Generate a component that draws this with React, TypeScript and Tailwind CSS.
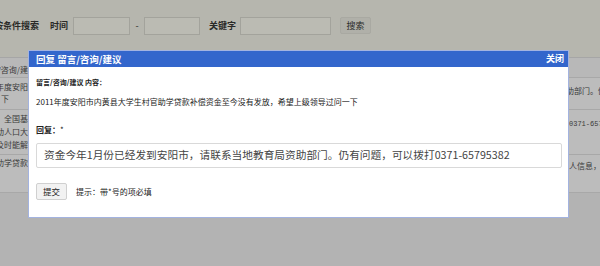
import React from 'react';

const font = "font-['Noto_Sans_CJK_SC','Noto_Sans',sans-serif]";

function SearchBar() {
  return (
    <div className="h-[58px] bg-[#b6b6ae] border-b border-[#a6a6a6] pt-[17px] flex items-start text-[9px] font-bold text-[#2a2a28] leading-[18px]">
      <span className="shrink-0 ml-[-6px] w-[44px] whitespace-nowrap">按条件搜索</span>
      <span className="shrink-0 ml-[12px] w-[23px]">时间</span>
      <div className="shrink-0 w-[57px] h-[18px] border border-[#a3a39c] bg-[#bbbbb3]" />
      <span className="shrink-0 w-[14px] text-center font-normal">-</span>
      <div className="shrink-0 w-[56px] h-[18px] border border-[#a3a39c] bg-[#bbbbb3]" />
      <span className="shrink-0 ml-[9px] w-[31px] whitespace-nowrap">关键字</span>
      <div className="shrink-0 w-[91px] h-[18px] border border-[#a3a39c] bg-[#bbbbb3]" />
      <button className="shrink-0 ml-[9px] w-[31px] h-[17px] rounded-[2px] border border-[#a9a9a2] bg-[#b0b0a9] text-[9px] font-normal leading-[15px] text-[#2a2a28]">
        搜索
      </button>
    </div>
  );
}

const rows = [
  { h: 20, bg: 'bg-[#b8b8b8]', left: ['留言/咨询/建'], right: [], leftPad: 'pt-[6px]', rightPad: '', lh: 'leading-[12px]' },
  { h: 32, bg: 'bg-[#bcbcbc]', left: ['2011年度安阳', '下'], right: ['教育局资助部门。仍'], leftPad: 'pt-[3px]', rightPad: 'pt-[7px]', lh: 'leading-[12px]' },
  { h: 45, bg: 'bg-[#bcbcbc]', left: ['全国基', '流动人口大', '能及时能解'], right: ['', '0371-65795382'], leftPad: 'pt-[2px]', rightPad: 'pt-[8px]', lh: 'leading-[13px]' },
  { h: 38, bg: 'bg-[#bcbcbc]', left: ['的助学贷款'], right: ['人信息，'], leftPad: 'pt-[2px]', rightPad: 'pt-[5px]', lh: 'leading-[12px]' },
];

function PageTable() {
  return (
    <div>
      {rows.map((r, i) => (
        <div
          key={i}
          className={`flex border-b border-[#a8a8a8] ${r.bg}`}
          style={{ height: r.h }}
        >
          <div className={`w-[28px] overflow-hidden flex flex-col items-end text-[8px] text-[#3a3a3a] whitespace-nowrap ${r.lh} ${r.leftPad}`}>
            {r.left.map((t, j) => (
              <span key={j} className={i === 1 && j === 1 ? 'self-start pl-[1px]' : ''}>{t}</span>
            ))}
          </div>
          <div className="flex-1" />
          <div className={`w-[31px] overflow-hidden flex flex-col text-[8px] text-[#3a3a3a] whitespace-nowrap ${r.lh} ${r.rightPad}`}>
            {r.right.map((t, j) => (
              <span key={j} className={t.startsWith('0371') ? "font-['Liberation_Mono',monospace] text-[7px]" : i === 1 ? 'ml-[-35px]' : ''}>
                {t}
              </span>
            ))}
          </div>
        </div>
      ))}
    </div>
  );
}

function ReplyDialog() {
  return (
    <div className="absolute left-[28px] top-[50px] w-[541px] border border-[#a3b3e0] bg-white">
      <div className="h-[16px] bg-[#3366cc] flex items-center justify-between px-[7px] text-white font-bold">
        <span className="text-[9.5px] leading-[16px]">回复 留言/咨询/建议</span>
        <span className="text-[9px] leading-[16px] mr-[-3px]">关闭</span>
      </div>
      <div className="pl-[7px] pr-[6px] pt-[10px] pb-[17px] text-[#222]">
        <div className="text-[7px] leading-[10px] font-bold">留言/咨询/建议 内容：</div>
        <div className="mt-[10px] text-[8px] leading-[10px]">
          2011年度安阳市内黄县大学生村官助学贷款补偿资金至今没有发放，希望上级领导过问一下
        </div>
        <div className="mt-[18px] text-[8px] leading-[10px] font-bold">
          回复：<span className="font-normal">*</span>
        </div>
        <div className="mt-[8px] h-[25px] border border-[#d9d9d9] rounded-[2px] pl-[7px] flex items-center text-[10.7px] text-[#444] whitespace-nowrap">
          资金今年1月份已经发到安阳市，请联系当地教育局资助部门。仍有问题，可以拨打0371-65795382
        </div>
        <div className="mt-[15px] flex items-center">
          <button className="w-[31px] h-[17px] rounded-[2px] border border-[#d0d0d0] bg-[#f2f2f2] text-[8.5px] leading-[15px] text-[#222]">
            提交
          </button>
          <span className="ml-[9px] text-[8px] leading-[10px] text-[#222]">提示：带*号的项必填</span>
        </div>
      </div>
    </div>
  );
}

export default function App() {
  return (
    <div className={`relative w-[600px] h-[266px] overflow-hidden bg-[#b3b3b3] ${font}`}>
      <SearchBar />
      <PageTable />
      <ReplyDialog />
    </div>
  );
}
